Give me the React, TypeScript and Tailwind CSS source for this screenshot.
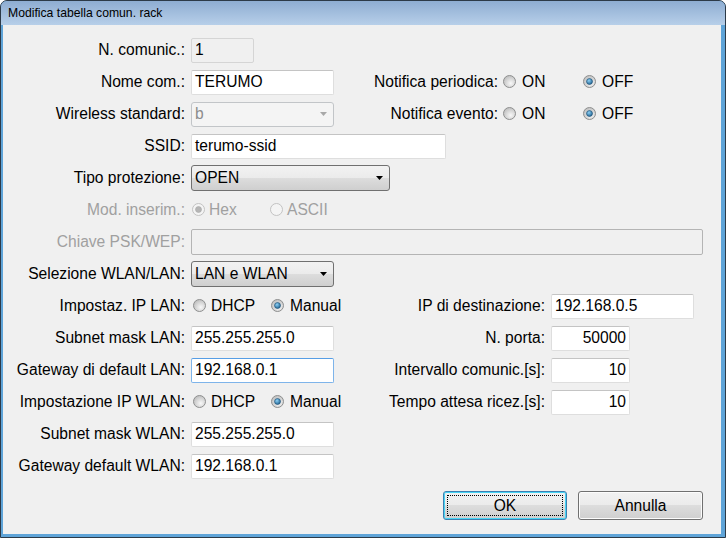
import React from "react";

// Windows 7 style dialog: "Modifica tabella comun. rack"

const font = "font-['Liberation_Sans',Arial,sans-serif]";

type RadioProps = { checked?: boolean; disabled?: boolean };

const Radio = ({ checked, disabled }: RadioProps) => (
  <svg width="13" height="13" viewBox="0 0 13 13" className="shrink-0">
    <defs>
      <radialGradient id="rb-fill" cx="0.6" cy="0.65" r="0.6">
        <stop offset="0" stopColor="#f8f8f8" />
        <stop offset="1" stopColor="#c4c4c4" />
      </radialGradient>
      <radialGradient id="rb-dot" cx="0.4" cy="0.35" r="0.7">
        <stop offset="0" stopColor="#8cd0f5" />
        <stop offset="1" stopColor="#1b5d8c" />
      </radialGradient>
    </defs>
    <circle
      cx="6.5"
      cy="6.5"
      r="6"
      fill={disabled ? "#f4f4f4" : "url(#rb-fill)"}
      stroke={disabled ? "#c2c2c2" : "#8e8f8f"}
    />
    {checked && (
      <circle
        cx="6.5"
        cy="6.5"
        r="3"
        fill={disabled ? "#b5b5b5" : "url(#rb-dot)"}
        stroke={disabled ? "#a8a8a8" : "#1f4f73"}
        strokeWidth="0.6"
      />
    )}
  </svg>
);

type OptionProps = { label: string; checked?: boolean; disabled?: boolean; width: string; gap: string };

const Option = ({ label, checked, disabled, width, gap }: OptionProps) => (
  <div className={`flex items-center ${width}`}>
    <Radio checked={checked} disabled={disabled} />
    <span className={`${gap} ${disabled ? "text-[#a0a0a0]" : "text-black"}`}>{label}</span>
  </div>
);

const Arrow = ({ color }: { color: string }) => (
  <svg width="7" height="4" viewBox="0 0 7 4">
    <path d="M0 0H7L3.5 4Z" fill={color} />
  </svg>
);

const Label = ({ text, className, disabled }: { text: string; className: string; disabled?: boolean }) => (
  <div className={`${className} text-right whitespace-nowrap ${disabled ? "text-[#a0a0a0]" : "text-black"}`}>{text}</div>
);

const TextBox = ({ value, className, right, focused }: { value: string; className: string; right?: boolean; focused?: boolean }) => (
  <div
    className={`${className} h-[25px] flex items-center bg-white border px-[3px] rounded-[2px] ${
      right ? "justify-end" : ""
    } ${focused ? "border-[#7eb4ea] border-t-[#569de5]" : "border-[#dedede] border-t-[#c4c4c4]"}`}
  >
    {value}
  </div>
);

const Combo = ({ value, className, disabled }: { value: string; className: string; disabled?: boolean }) => (
  <div
    className={`${className} flex items-center justify-between pl-[3px] pr-[6px] rounded-[3px] border ${
      disabled
        ? "h-[25px] bg-[#f4f4f4] border-[#c2c5c8] text-[#8c8c8c]"
        : "h-[26px] border-[#707070] bg-[linear-gradient(#f2f2f2,#ebebeb_50%,#dddddd_50%,#cfcfcf)] text-black"
    }`}
  >
    <span>{value}</span>
    <Arrow color={disabled ? "#a8a8a8" : "#000000"} />
  </div>
);

const Button = ({ label, primary, className }: { label: string; primary?: boolean; className: string }) => (
  <div
    className={`${className} relative h-[29px] flex items-center justify-center rounded-[3px] border bg-[linear-gradient(#f2f2f2,#ebebeb_50%,#dddddd_50%,#cfcfcf)] ${
      primary
        ? "border-[#3c7fb1] shadow-[inset_0_0_0_1px_#48d4f4]"
        : "border-[#707070] shadow-[inset_0_0_0_1px_#fcfcfc]"
    }`}
  >
    {primary && <span className="absolute inset-[3px] border border-dotted border-black" />}
    {label}
  </div>
);

const Row = ({ children }: { children: React.ReactNode }) => (
  <div className="flex items-center h-8">{children}</div>
);

export default function App() {
  return (
    <div
      className={`${font} w-[726px] h-[538px] flex flex-col rounded-t-[7px] border border-[#2c3a48] bg-[#5fa4d8] overflow-hidden`}
    >
      {/* Title bar */}
      <div className="h-[24px] shrink-0 flex items-center pl-[7px] text-[12.2px] text-black bg-[linear-gradient(#8eadd2,#b7cfe9)]">
        Modifica tabella comun. rack
      </div>

      {/* Client area */}
      <div className="flex-1 ml-[2px] mr-[4px] mb-[3px] bg-[#f0f0f0] text-[15.6px] pt-[9px]">
        <Row>
          <Label text="N. comunic.:" className="w-[188px] pr-[6px]" />
          <div className="w-[63px] h-[25px] flex items-center px-[3px] border border-[#d5d5d5] rounded-[2px] bg-[#f0f0f0]">1</div>
        </Row>

        <Row>
          <div className="flex items-center w-[348px]">
            <Label text="Nome com.:" className="w-[188px] pr-[6px]" />
            <TextBox value="TERUMO" className="w-[143px]" />
          </div>
          <Label text="Notifica periodica:" className="w-[152px] pr-[5px]" />
          <Option label="ON" width="w-[80px]" gap="ml-[6px]" />
          <Option label="OFF" checked width="w-[60px]" gap="ml-[6px]" />
        </Row>

        <Row>
          <div className="flex items-center w-[348px]">
            <Label text="Wireless standard:" className="w-[188px] pr-[6px]" />
            <Combo value="b" className="w-[143px]" disabled />
          </div>
          <Label text="Notifica evento:" className="w-[152px] pr-[5px]" />
          <Option label="ON" width="w-[80px]" gap="ml-[6px]" />
          <Option label="OFF" checked width="w-[60px]" gap="ml-[6px]" />
        </Row>

        <Row>
          <Label text="SSID:" className="w-[188px] pr-[6px]" />
          <TextBox value="terumo-ssid" className="w-[255px]" />
        </Row>

        <Row>
          <Label text="Tipo protezione:" className="w-[188px] pr-[6px]" />
          <Combo value="OPEN" className="w-[199px]" />
        </Row>

        <Row>
          <Label text="Mod. inserim.:" className="w-[188px] pr-[6px]" disabled />
          <div className="flex items-center ml-[1px]">
            <Option label="Hex" checked disabled width="w-[78px]" gap="ml-[4px]" />
            <Option label="ASCII" disabled width="w-[70px]" gap="ml-[4px]" />
          </div>
        </Row>

        <Row>
          <Label text="Chiave PSK/WEP:" className="w-[188px] pr-[6px]" disabled />
          <div className="w-[512px] h-[26px] border border-[#b4b4b4] rounded-[2px] bg-[#f0f0f0]" />
        </Row>

        <Row>
          <Label text="Selezione WLAN/LAN:" className="w-[188px] pr-[6px]" />
          <Combo value="LAN e WLAN" className="w-[143px]" />
        </Row>

        <Row>
          <div className="flex items-center w-[348px]">
            <Label text="Impostaz. IP LAN:" className="w-[188px] pr-[6px]" />
            <div className="flex items-center ml-[2px]">
              <Option label="DHCP" width="w-[78px]" gap="ml-[5px]" />
              <Option label="Manual" checked width="w-[70px]" gap="ml-[6px]" />
            </div>
          </div>
          <Label text="IP di destinazione:" className="w-[200px] pr-[6px]" />
          <TextBox value="192.168.0.5" className="w-[143px]" />
        </Row>

        <Row>
          <div className="flex items-center w-[348px]">
            <Label text="Subnet mask LAN:" className="w-[188px] pr-[6px]" />
            <TextBox value="255.255.255.0" className="w-[143px]" />
          </div>
          <Label text="N. porta:" className="w-[200px] pr-[6px]" />
          <TextBox value="50000" className="w-[79px]" right />
        </Row>

        <Row>
          <div className="flex items-center w-[348px]">
            <Label text="Gateway di default LAN:" className="w-[188px] pr-[6px]" />
            <TextBox value="192.168.0.1" className="w-[143px]" focused />
          </div>
          <Label text="Intervallo comunic.[s]:" className="w-[200px] pr-[6px]" />
          <TextBox value="10" className="w-[79px]" right />
        </Row>

        <Row>
          <div className="flex items-center w-[348px]">
            <Label text="Impostazione IP WLAN:" className="w-[188px] pr-[6px]" />
            <div className="flex items-center ml-[2px]">
              <Option label="DHCP" width="w-[78px]" gap="ml-[5px]" />
              <Option label="Manual" checked width="w-[70px]" gap="ml-[6px]" />
            </div>
          </div>
          <Label text="Tempo attesa ricez.[s]:" className="w-[200px] pr-[6px]" />
          <TextBox value="10" className="w-[79px]" right />
        </Row>

        <Row>
          <Label text="Subnet mask WLAN:" className="w-[188px] pr-[6px]" />
          <TextBox value="255.255.255.0" className="w-[143px]" />
        </Row>

        <Row>
          <Label text="Gateway default WLAN:" className="w-[188px] pr-[6px]" />
          <TextBox value="192.168.0.1" className="w-[143px]" />
        </Row>

        {/* Dialog buttons */}
        <div className="flex justify-end gap-[11px] pr-[18px] mt-[9px]">
          <Button label="OK" primary className="w-[124px]" />
          <Button label="Annulla" className="w-[125px]" />
        </div>
      </div>
    </div>
  );
}
